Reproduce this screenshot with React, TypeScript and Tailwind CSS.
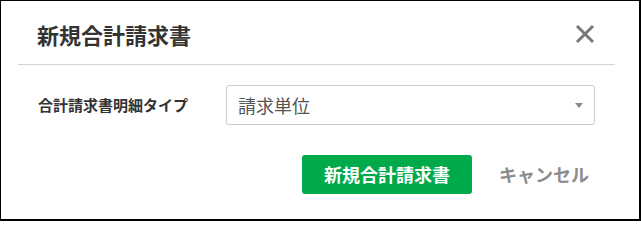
import React from "react";

const jp = { fontFamily: '"Noto Sans CJK JP", "Noto Sans", sans-serif' };

export default function App() {
  return (
    <div
      className="w-[641px] h-[221px] border-l border-t border-r-2 border-b-2 border-black bg-white text-[#333]"
      style={jp}
    >
      <div className="flex items-center justify-between pl-[36px] pr-[44px] h-[63px] pt-[2px]">
        <h2 className="text-[22px] font-bold leading-none">新規合計請求書</h2>
        <svg width="20" height="20" viewBox="0 0 20 20" className="text-[#777]">
          <path d="M2 2 L18 18 M18 2 L2 18" stroke="currentColor" strokeWidth="3" />
        </svg>
      </div>
      <div className="mx-[17px] mr-[24px] h-px bg-[#d4d4d4]" />
      <div className="flex items-center mt-[20px] pl-[37px] pr-[44px]">
        <div className="w-[188px] text-[15px] font-bold">合計請求書明細タイプ</div>
        <div className="flex-1 h-[40px] border border-[#ccc] rounded-[3px] flex items-center justify-between pl-[11px] pr-[11px]">
          <span className="text-[18px] text-[#555]">請求単位</span>
          <svg width="8" height="5" viewBox="0 0 8 5">
            <path d="M0 0 L8 0 L4 5 Z" fill="#888" />
          </svg>
        </div>
      </div>
      <div className="flex items-center justify-end mt-[30px] pr-[50px] gap-[27px]">
        <button className="w-[170px] h-[39px] rounded-[3px] bg-[#00a94a] text-white text-[18px] font-bold">
          新規合計請求書
        </button>
        <button className="text-[18px] font-bold text-[#8c8c8c]">キャンセル</button>
      </div>
    </div>
  );
}
